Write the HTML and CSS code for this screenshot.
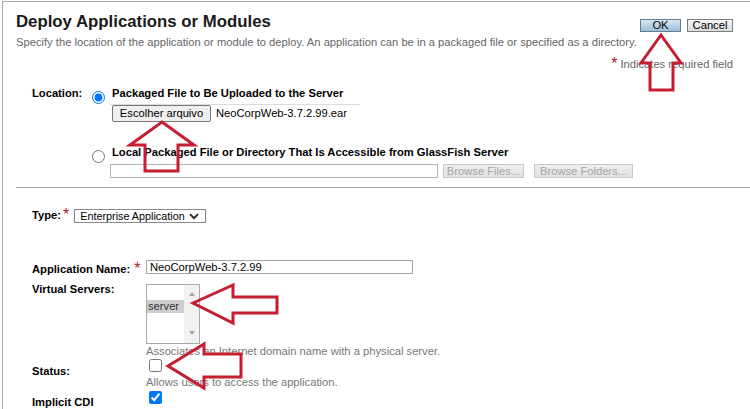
FILE: index.html
```html
<!DOCTYPE html>
<html lang="en">
<head>
<meta charset="utf-8">
<title>Deploy Applications or Modules</title>
<link rel="stylesheet" href="styles.css">
</head>
<body>
<div class="page">
  <div class="head">
    <h1 class="title">Deploy Applications or Modules</h1>
    <div class="actions">
      <button type="button" class="btn btn-ok">OK</button>
      <button type="button" class="btn btn-cancel">Cancel</button>
    </div>
  </div>
  <p class="subtitle">Specify the location of the application or module to deploy. An application can be in a packaged file or specified as a directory.</p>
  <p class="required"><span class="req">*</span>Indicates required field</p>

  <div class="loc">
    <div class="loc-label">Location:</div>
    <div class="loc-body">
      <label class="radio-row"><input type="radio" name="loc" checked><span class="radio-text">Packaged File to Be Uploaded to the Server</span></label>
      <div class="file-row"><button type="button" class="file-btn">Escolher arquivo</button><span class="file-name">NeoCorpWeb-3.7.2.99.ear</span></div>
      <label class="radio-row radio-row-2"><input type="radio" name="loc"><span class="radio-text">Local Packaged File or Directory That Is Accessible from GlassFish Server</span></label>
      <div class="path-row"><input class="path-input" type="text"><button type="button" class="btn-dis" disabled>Browse Files...</button><button type="button" class="btn-dis btn-dis-2" disabled>Browse Folders...</button></div>
    </div>
  </div>

  <div class="divider"></div>

  <div class="type-row">
    <span class="label">Type:</span><span class="req">*</span>
    <div class="select"><span class="select-text">Enterprise Application</span><svg class="chev" width="10" height="7" viewBox="0 0 10 7"><path d="M1 1.2 L5 5.2 L9 1.2" fill="none" stroke="#222" stroke-width="1.8"/></svg></div>
  </div>

  <div class="prop prop-name">
    <div class="prop-label lbl-name"><span class="label">Application Name:</span><span class="req req-name">*</span></div>
    <input class="name-input" type="text" value="NeoCorpWeb-3.7.2.99">
  </div>

  <div class="prop prop-vs">
    <div class="prop-label"><span class="label">Virtual Servers:</span></div>
    <div class="field field-vs">
      <div class="listbox">
        <div class="list-items"><div class="opt-sel">server</div></div>
        <div class="list-scroll"><span class="arr-up"></span><span class="arr-down"></span></div>
      </div>
      <div class="help">Associates an Internet domain name with a physical server.</div>
    </div>
  </div>

  <div class="prop prop-status">
    <div class="prop-label lbl-status"><span class="label">Status:</span></div>
    <div class="field">
      <input type="checkbox" class="chk chk-status">
      <div class="help help-status">Allows users to access the application.</div>
    </div>
  </div>

  <div class="prop prop-cdi">
    <div class="prop-label lbl-status"><span class="label">Implicit CDI</span></div>
    <div class="field">
      <input type="checkbox" class="chk chk-cdi" checked>
    </div>
  </div>
</div>

<svg class="arrows" width="750" height="409" viewBox="0 0 750 409">
  <g fill="none" stroke="#c41e30" stroke-width="3" stroke-linejoin="miter">
    <polygon points="661,35 681,63 673,63 673,90 650,90 650,63 641,63"/>
    <polygon points="162,122 194,145 178,145 178,171 145,171 145,145 130,145"/>
    <polygon points="193,303 233,285 233,297 277,297 277,313 233,313 233,323"/>
    <polygon points="168,366 204,344 204,354 241,354 241,377 204,377 204,388"/>
  </g>
</svg>
</body>
</html>
```

FILE: styles.css
```css
* { box-sizing: border-box; }
html, body { margin: 0; padding: 0; }
body {
  width: 750px;
  height: 409px;
  overflow: hidden;
  position: relative;
  background: #fff;
  color: #000;
  font-family: "Liberation Sans", Arial, sans-serif;
  font-size: 11.2px;
}
.page {
  margin: 1px 0 0 2px;
  height: 408px;
  border-top: 1px solid #a8a8a8;
  border-left: 1px solid #a8a8a8;
}
.head {
  display: flex;
  justify-content: space-between;
  align-items: flex-start;
  padding: 0 17px 0 13px;
}
.title {
  margin: 10px 0 0;
  font-size: 16.8px;
  line-height: 20px;
  font-weight: bold;
  color: #1a1a1a;
}
.actions { display: flex; gap: 6px; margin-top: 17px; }
.btn {
  height: 13px;
  padding: 0;
  font-family: "Liberation Sans", Arial, sans-serif;
  font-size: 11.2px;
  line-height: 11px;
  border: 1px solid #7d7d7d;
  color: #000;
}
.btn-ok { width: 41px; background: linear-gradient(#d6e7f2, #9fc0d7); border-color: #5f7f98; }
.btn-cancel { width: 46px; background: linear-gradient(#f6f6f6, #dcdcdc); }
.subtitle {
  margin: 3px 0 0 13px;
  line-height: 14px;
  color: #666;
  white-space: nowrap;
}
.required {
  margin: 8px 17px 0 0;
  text-align: right;
  line-height: 14px;
  color: #666;
}
.req {
  display: inline-block;
  vertical-align: top;
  height: 14px;
  font-size: 16px;
  line-height: 14px;
  color: #a11b2c;
  margin-right: 3px;
}
.loc { display: flex; margin-top: 14.5px; padding-left: 29px; }
.loc-label { width: 60px; font-weight: bold; line-height: 14px; }
.loc-body { display: flex; flex-direction: column; }
.radio-row { display: flex; align-items: flex-start; height: 18px; }
.radio-row input { margin: 5px 7px 0 0; width: 13px; height: 13px; }
.radio-text { font-weight: bold; line-height: 14px; white-space: nowrap; }
.radio-row-2 { margin-top: 23.5px; }
.file-row {
  margin-left: 18px;
  width: 250px;
  border-top: 1px solid #dcdcdc;
  display: flex;
  align-items: center;
  padding-left: 2px;
}
.file-btn {
  width: 99px;
  height: 17px;
  padding: 0;
  font-family: "Liberation Sans", Arial, sans-serif;
  font-size: 11.2px;
  background: #efefef;
  border: 1px solid #767676;
  border-radius: 2px;
  color: #000;
}
.file-name { margin-left: 5px; line-height: 14px; white-space: nowrap; }
.path-row { display: flex; margin-left: 18px; margin-top: 0.5px; }
.path-input {
  width: 328px;
  height: 14px;
  margin: 0;
  padding: 0;
  border: 1px solid #b4b4b4;
  background: #fff;
}
.btn-dis {
  width: 81px;
  height: 14px;
  margin-left: 5px;
  padding: 0;
  font-family: "Liberation Sans", Arial, sans-serif;
  font-size: 11.2px;
  line-height: 12px;
  border: 1px solid #c8c8c8;
  background: linear-gradient(#eeeeee, #e2e2e2);
  color: #a5a5a5;
}
.btn-dis-2 { width: 99px; margin-left: 10px; }
.divider { margin: 9.5px 0 0 13px; border-top: 1px solid #a8a8a8; }
.type-row { display: flex; align-items: flex-start; margin-top: 20px; padding-left: 29px; }
.label { font-weight: bold; line-height: 14px; white-space: nowrap; }
.type-row .req { margin: 0 0 0 2px; }
.select {
  margin: 1px 0 0 5px;
  width: 132px;
  height: 14px;
  border: 1px solid #8a8a8a;
  display: flex;
  align-items: center;
  justify-content: space-between;
  padding: 0 6px 0 5px;
  line-height: 12px;
}
.select-text { font-size: 10.8px; white-space: nowrap; }
.chev { flex: none; }
.prop { display: flex; align-items: flex-start; padding-left: 29px; }
.prop-label { width: 114px; flex: none; display: flex; align-items: flex-start; }
.prop-name { margin-top: 37px; }
.lbl-name { margin-top: 2px; }
.req-name { margin: 0 0 0 4px; }
.name-input {
  width: 267px;
  height: 14px;
  margin: 0;
  padding: 0 0 0 3px;
  border: 1px solid #a5a5a5;
  font-family: "Liberation Sans", Arial, sans-serif;
  font-size: 11.2px;
  line-height: 12px;
  color: #000;
}
.prop-vs { margin-top: 6px; }
.field { display: flex; flex-direction: column; }
.field-vs { margin-top: 2px; }
.listbox {
  width: 54px;
  height: 60px;
  border: 1px solid #a9a9a9;
  display: flex;
}
.list-items { flex: 1; padding-top: 15px; }
.opt-sel { height: 13px; line-height: 13px; padding-left: 1px; background: #cecece; color: #333; }
.list-scroll {
  width: 15px;
  background: #f1f1f1;
  display: flex;
  flex-direction: column;
  justify-content: space-between;
  align-items: center;
  padding: 7px 0 8px;
}
.arr-up, .arr-down { width: 0; height: 0; border-left: 3.5px solid transparent; border-right: 3.5px solid transparent; }
.arr-up { border-bottom: 4px solid #a3a3a3; }
.arr-down { border-top: 4px solid #a3a3a3; }
.help { color: #777; line-height: 14px; white-space: nowrap; }
.lbl-status { margin-top: 6px; }
.chk { width: 13px; height: 13px; margin: 1px 0 0 3px; }
.help-status { margin-top: 3px; }
.chk-cdi { margin-top: 2px; }
.arrows { position: absolute; left: 0; top: 0; pointer-events: none; }
```
